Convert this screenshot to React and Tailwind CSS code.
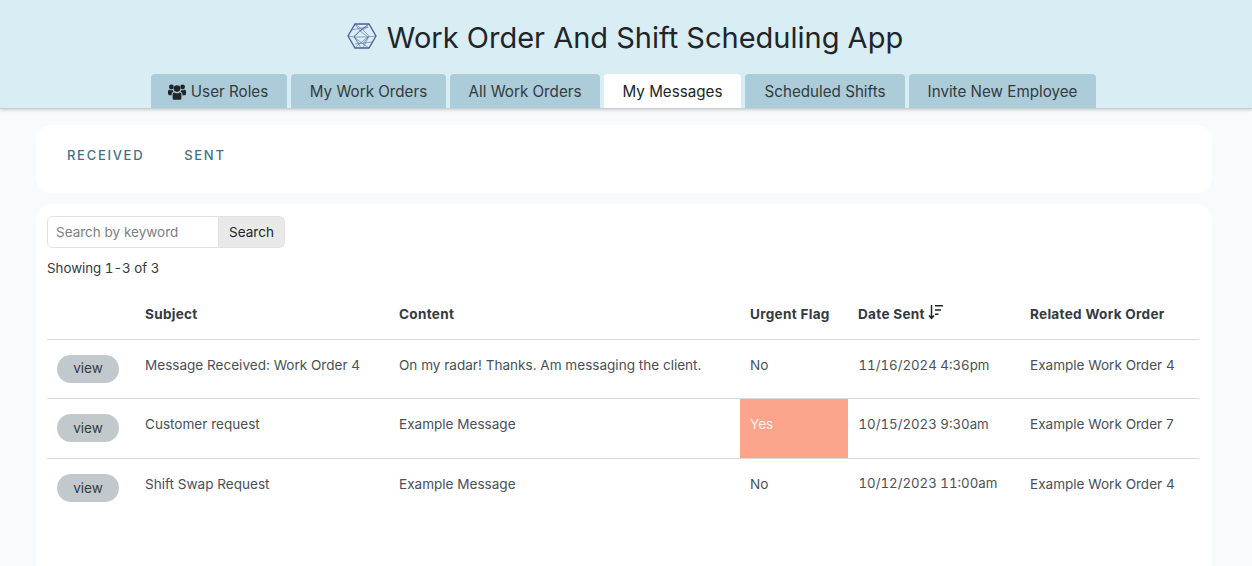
const tabs = [
  { name: "My Work Orders", w: "w-[155px]" },
  { name: "All Work Orders", w: "w-[150px]" },
  { name: "My Messages", w: "w-[137px]" },
  { name: "Scheduled Shifts", w: "w-[160px]" },
  { name: "Invite New Employee", w: "w-[187px]" },
];

const rows = [
  { subject: "Message Received: Work Order 4", content: "On my radar! Thanks. Am messaging the client.", urgent: false, date: "11/16/2024 4:36pm", order: "Example Work Order 4", h: "h-[59px]", pad: "pb-[7px]" },
  { subject: "Customer request", content: "Example Message", urgent: true, date: "10/15/2023 9:30am", order: "Example Work Order 7", h: "h-[60px]", pad: "pb-[7px]" },
  { subject: "Shift Swap Request", content: "Example Message", urgent: false, date: "10/12/2023 11:00am", order: "Example Work Order 4", h: "h-[60px]", pad: "pb-[9px]" },
];

function Logo() {
  return (
    <svg width="30" height="26" viewBox="0 0 30 26" fill="none" stroke="#4a5f96" className="mr-[10px] mt-[-3px]">
      <path d="M8 1h14l7 12-7 12H8L1 13z" strokeWidth="1.3" />
      <path d="M8 1l5 7-6 6 5 7-4 4M22 1l-9 7 8 6-5 7 6 4M1 13l6 1 14 0 8-1M13 8l8-4M7 14l9 7M21 14l-9 7M8 1l8 6 6 6-6 12M22 1l-7 5-8 7 7 12M4 7l17-3M26 19l-18 2" strokeWidth="0.55" />
    </svg>
  );
}

function UsersIcon() {
  return (
    <svg width="18" height="16" viewBox="0 0 18 16" fill="#212529">
      <circle cx="9" cy="4.6" r="3.3" />
      <circle cx="3.4" cy="3" r="2.4" />
      <circle cx="14.6" cy="3" r="2.4" />
      <path d="M4.6 10.2C4.6 9 5.5 8.4 6.4 8.4c.8.6 1.6.9 2.6.9s1.8-.3 2.6-.9c.9 0 1.8.6 1.8 1.8v4c0 1-.7 1.6-1.6 1.6H6.2c-.9 0-1.6-.6-1.6-1.6z" />
      <path d="M0 7.4C0 6.3.7 5.7 1.6 5.7c.6.4 1.2.6 1.9.6.4 0 .8 0 1.2-.2.1.7.4 1.3.8 1.7-1 .3-1.8 1.2-1.9 2.5v.9H1.2C.5 10.7 0 10.2 0 9.5z" />
      <path d="M18 7.4c0-1.1-.7-1.7-1.6-1.7-.6.4-1.2.6-1.9.6-.4 0-.8 0-1.2-.2-.1.7-.4 1.3-.8 1.7 1 .3 1.8 1.2 1.9 2.5v.9h2.4c.7 0 1.2-.5 1.2-1.2z" />
    </svg>
  );
}

function SortIcon() {
  return (
    <svg width="15" height="16" viewBox="0 0 15 16" fill="none" stroke="#212529" strokeWidth="1.5" className="mt-[-5px]">
      <path d="M3.5 1v13M1 11.5l2.5 2.8 2.5-2.8" />
      <path d="M7 1.7h8M7 6h6M7 10.2h3.5" />
    </svg>
  );
}

export default function App() {
  return (
    <div className="h-[566px] overflow-hidden bg-[#f8fafc] text-[#212529] font-['Inter',sans-serif]">
      <header className="h-[109px] bg-[#d9edf4] border-b border-[#c6cfd2] shadow-[0_1px_3px_rgba(0,0,0,0.2)] relative">
        <div className="h-[74px] flex items-center justify-center pr-[2px]">
          <Logo />
          <h1 className="text-[29px] leading-none font-normal text-[#212529]">Work Order And Shift Scheduling App</h1>
        </div>
        <nav className="h-[34px] flex justify-center gap-[4px] pr-[5px] text-[15.2px]">
          <a className="w-[136px] bg-[#abccd8] rounded-t-[4px] flex items-center justify-center gap-[5px] pt-[2px] pr-[2px] text-[#343a40]">
            <UsersIcon />
            User Roles
          </a>
          {tabs.map((t) => (
            <a
              key={t.name}
              className={`${t.w} pt-[2px] rounded-t-[4px] flex items-center justify-center ${t.name === "My Messages" ? "bg-white text-[#212529]" : "bg-[#abccd8] text-[#343a40]"}`}
            >
              {t.name}
            </a>
          ))}
        </nav>
      </header>

      <main className="pl-[36px] pr-[40px] pt-[16px] flex flex-col gap-[11px]">
        <section className="h-[68px] bg-white rounded-[16px] flex items-start pt-[23px] pl-[31px] gap-[40px] text-[13px] leading-[14px] font-medium tracking-[1.7px] text-[#3f7283]">
          <span>RECEIVED</span>
          <span>SENT</span>
        </section>

        <section className="bg-white rounded-[16px] h-[400px] px-[11px] pt-[12px]">
          <div className="flex w-[238px] h-[32px] text-[13.5px]">
            <input
              placeholder="Search by keyword"
              className="w-[172px] border border-[#dee2e6] rounded-l-[6px] px-[8px] placeholder:text-[#7a7f85] outline-none"
            />
            <button className="flex-1 bg-[#e9e9e9] border border-l-0 border-[#dee2e6] rounded-r-[6px] text-[#212529]">Search</button>
          </div>
          <p className="mt-[11px] text-[13.3px] leading-[18px] tabular-nums text-[#343a40]">Showing 1-3 of 3</p>

          <table className="w-[1152px] mt-[11px] table-fixed border-collapse text-[13.55px] text-[#495057]">
            <colgroup>
              <col className="w-[88px]" />
              <col className="w-[254px]" />
              <col className="w-[351px]" />
              <col className="w-[108px]" />
              <col className="w-[172px]" />
              <col className="w-[179px]" />
            </colgroup>
            <thead>
              <tr className="h-[51px] border-b border-[#d9d9d9] text-[13.55px] tracking-[0.3px] text-[#343a40] text-left">
                <th></th>
                <th className="pl-[10px] pt-[2px] font-bold">Subject</th>
                <th className="pl-[10px] pt-[2px] font-bold">Content</th>
                <th className="pl-[10px] pt-[2px] font-bold">Urgent Flag</th>
                <th className="pl-[10px] pt-[2px] font-bold">
                  <span className="flex items-center gap-[3px]">
                    Date Sent
                    <SortIcon />
                  </span>
                </th>
                <th className="pl-[10px] pt-[2px] font-bold">Related Work Order</th>
              </tr>
            </thead>
            <tbody>
              {rows.map((r, i) => (
                <tr key={i} className={`${r.h} ${i < 2 ? "border-b border-[#d9d9d9]" : ""}`}>
                  <td className="pl-[10px]">
                    <button className="w-[62px] h-[28px] block rounded-full bg-[#c2c9cc] text-[13.55px] text-[#343a40]">view</button>
                  </td>
                  <td className={`pl-[10px] ${r.pad}`}>{r.subject}</td>
                  <td className={`pl-[10px] ${r.pad}`}>{r.content}</td>
                  <td className={`pl-[10px] ${r.pad} ${r.urgent ? "bg-[#fca48c] text-[#fdf1ec]" : ""}`}>{r.urgent ? "Yes" : "No"}</td>
                  <td className={`pl-[10.5px] ${r.pad} text-[13.25px] leading-[21px] tabular-nums`}>{r.date}</td>
                  <td className={`pl-[10px] ${r.pad}`}>{r.order}</td>
                </tr>
              ))}
            </tbody>
          </table>
        </section>
      </main>
    </div>
  );
}
